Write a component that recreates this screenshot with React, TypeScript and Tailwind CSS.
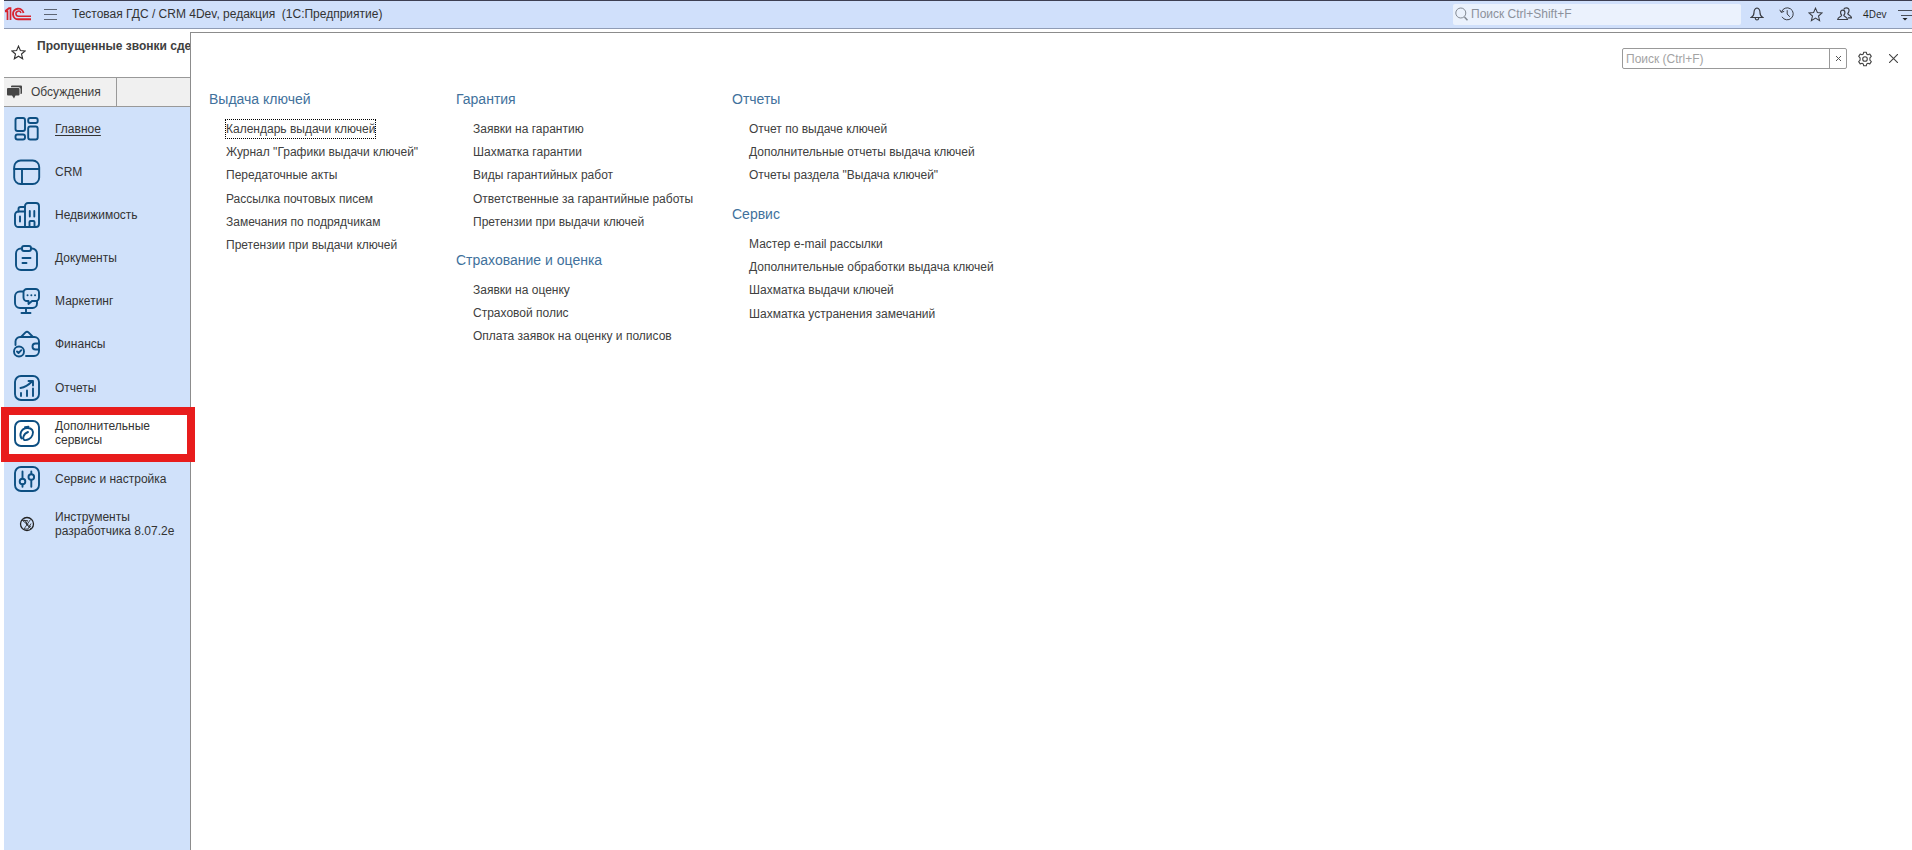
import type { ReactNode } from 'react';

interface MenuGroup {
  title: string;
  links: string[];
}

interface Section {
  label: string;
  icon: ReactNode;
  height: string;
  underlined?: boolean;
  active?: boolean;
}

const COLUMNS: { width: string; groups: MenuGroup[] }[] = [
  {
    width: 'w-[247px]',
    groups: [
      {
        title: 'Выдача ключей',
        links: [
          'Календарь выдачи ключей',
          'Журнал "Графики выдачи ключей"',
          'Передаточные акты',
          'Рассылка почтовых писем',
          'Замечания по подрядчикам',
          'Претензии при выдачи ключей',
        ],
      },
    ],
  },
  {
    width: 'w-[276px]',
    groups: [
      {
        title: 'Гарантия',
        links: [
          'Заявки на гарантию',
          'Шахматка гарантии',
          'Виды гарантийных работ',
          'Ответственные за гарантийные работы',
          'Претензии при выдачи ключей',
        ],
      },
      {
        title: 'Страхование и оценка',
        links: ['Заявки на оценку', 'Страховой полис', 'Оплата заявок на оценку и полисов'],
      },
    ],
  },
  {
    width: 'w-[276px]',
    groups: [
      {
        title: 'Отчеты',
        links: [
          'Отчет по выдаче ключей',
          'Дополнительные отчеты выдача ключей',
          'Отчеты раздела "Выдача ключей"',
        ],
      },
      {
        title: 'Сервис',
        links: [
          'Мастер e-mail рассылки',
          'Дополнительные обработки выдача ключей',
          'Шахматка выдачи ключей',
          'Шахматка устранения замечаний',
        ],
      },
    ],
  },
];

function SectionIcon({ children }: { children: ReactNode }) {
  return (
    <svg
      width="28"
      height="28"
      viewBox="0 0 28 28"
      fill="none"
      stroke="#0d4f82"
      strokeWidth="1.9"
      strokeLinecap="round"
      strokeLinejoin="round"
      aria-hidden="true"
    >
      {children}
    </svg>
  );
}

const SECTIONS: Section[] = [
  {
    label: 'Главное',
    height: 'h-[43px]',
    underlined: true,
    icon: (
      <SectionIcon>
        <rect x="2.5" y="3" width="9.5" height="13" rx="2" />
        <rect x="2.5" y="19.5" width="9.5" height="5" rx="2" />
        <rect x="15.2" y="3" width="9.5" height="5" rx="2" />
        <rect x="15.2" y="11.5" width="9.5" height="13" rx="2" />
      </SectionIcon>
    ),
  },
  {
    label: 'CRM',
    height: 'h-[43px]',
    icon: (
      <SectionIcon>
        <rect x="1.2" y="2.5" width="25" height="23.5" rx="6.5" />
        <path d="M1.2 11h25M9 11v15" />
      </SectionIcon>
    ),
  },
  {
    label: 'Недвижимость',
    height: 'h-[43px]',
    icon: (
      <SectionIcon>
        <path d="M12 26H5.5A3.5 3.5 0 0 1 2 22.500V14a3.500 3.500 0 0 1 3.500-3.500H12" />
        <path d="M5.500 10.500V8a2 2 0 0 1 2-2H12" />
        <path d="M12 26V5a3 3 0 0 1 3-3h8a3 3 0 0 1 3 3v18a3 3 0 0 1-3 3z" />
        <path d="M7 15.500v5M16.800 10v5.500M21.300 10v5.500" />
        <path d="M16.500 26v-5a1 1 0 0 1 1-1h3a1 1 0 0 1 1 1v5" />
      </SectionIcon>
    ),
  },
  {
    label: 'Документы',
    height: 'h-[43px]',
    icon: (
      <SectionIcon>
        <path d="M9 4.500H8a5 5 0 0 0-5 5V21a5 5 0 0 0 5 5h11a5 5 0 0 0 5-5V9.500a5 5 0 0 0-5-5h-1" />
        <rect x="9" y="2" width="9" height="5" rx="2" />
        <path d="M9.500 14h8M9.500 19h4" />
      </SectionIcon>
    ),
  },
  {
    label: 'Маркетинг',
    height: 'h-[43px]',
    icon: (
      <SectionIcon>
        <path d="M10 4.500H7a5 5 0 0 0-5 5V16a5 5 0 0 0 5 5h12.500a4.500 4.500 0 0 0 4.500-4.500V14" />
        <path d="M14 2h8.500A3.500 3.500 0 0 1 26 5.500v5a3.500 3.500 0 0 1-3.500 3.500H19l-3.500 3v-3H14a3.500 3.500 0 0 1-3.500-3.500v-5A3.500 3.500 0 0 1 14 2z" />
        <path d="M14.500 8.300h.1M18.300 8.300h.1M22 8.300h.1M13 21v5M8.500 26h9" />
      </SectionIcon>
    ),
  },
  {
    label: 'Финансы',
    height: 'h-11',
    icon: (
      <SectionIcon>
        <path d="M2.500 15v-3.500A4.500 4.500 0 0 1 7 7h14.500a4.500 4.500 0 0 1 4.500 4.500V21a5 5 0 0 1-5 5h-8" />
        <path d="M8 7l4.500-4.600a2.200 2.200 0 0 1 3 0L20 7" />
        <path d="M26 13.500h-3.500a3 3 0 0 0 0 6H26" />
        <circle cx="6" cy="21.500" r="5" />
        <path d="M4 21.500L5.500 23l2.800-2.800" />
      </SectionIcon>
    ),
  },
  {
    label: 'Отчеты',
    height: 'h-[43px]',
    icon: (
      <SectionIcon>
        <rect x="2" y="2" width="24" height="24" rx="6" />
        <path d="M7.500 14c4.500-.8 8-3 11.500-6.500M15.500 7H20v4.500M8 19v3M14 16.500V22M20 14.500V22" />
      </SectionIcon>
    ),
  },
  {
    label: 'Дополнительные сервисы',
    height: 'h-12',
    active: true,
    icon: (
      <SectionIcon>
        <rect x="2" y="2" width="24" height="25" rx="6" />
        <path d="M8.500 19.500C6 15.500 8 9.500 14 9c5-.3 7 3 5.500 7-1.500 4-5.500 5.500-8 5-2.300-.7-1.500-6 3.500-8M12 8.200l3.500-.4" />
      </SectionIcon>
    ),
  },
  {
    label: 'Сервис и настройка',
    height: 'h-[43px]',
    icon: (
      <SectionIcon>
        <rect x="2" y="2" width="24" height="24" rx="6" />
        <circle cx="9.500" cy="16.500" r="2.800" />
        <circle cx="18.300" cy="12" r="2.800" />
        <path d="M9.500 6.500v7M9.500 19.500v2.300M18.300 6.500v2.300M18.300 15v6.800" />
      </SectionIcon>
    ),
  },
  {
    label: 'Инструменты разработчика 8.07.2е',
    height: 'h-12',
    icon: (
      <svg width="28" height="28" viewBox="0 0 28 28" fill="none" stroke="#222" aria-hidden="true">
        <circle cx="14" cy="14" r="6.500" strokeWidth="1.300" />
        <path d="M8.500 10.500h6l-1.500 3.500 5 5M11 9.500l3.500 5M17.500 9.500l-6.500 9.500h4l3-5.500M10 11l8 6" strokeWidth="0.800" />
      </svg>
    ),
  },
];

function Star({ size, strokeWidth, color }: { size: number; strokeWidth: number; color: string }) {
  return (
    <svg width={size} height={size} viewBox="0 0 16 16" fill="none" stroke={color} strokeWidth={strokeWidth} aria-hidden="true">
      <path d="M8 1.200l2 4.700 5.100.4-3.900 3.300 1.200 5L8 11.900l-4.400 2.700 1.200-5L.9 6.300 6 5.900z" />
    </svg>
  );
}

function Logo() {
  return (
    <svg width="28" height="14" viewBox="0 0 28 14" fill="none" stroke="#d8232f" aria-label="1С">
      <path d="M1 4.300h2.500V13M1.300 4L5 1.200h1.500V13" strokeWidth="1.700" />
      <path d="M19.500 6A5.300 5.300 0 1 0 14.500 12.300H27" strokeWidth="1.900" />
      <path d="M17 6A2.600 2.600 0 1 0 14.500 9.300H27" strokeWidth="1.500" />
    </svg>
  );
}

function TopBar() {
  return (
    <header className="flex h-[29px] items-center border-t border-b border-t-[#3d3f52] border-b-[#8f9cb5] bg-[#d0e0fb] pb-px">
      <Logo />
      <button type="button" aria-label="Главное меню" className="ml-3 flex w-[13px] flex-col gap-1">
        <span className="h-px bg-[#5d6573]" />
        <span className="h-px bg-[#5d6573]" />
        <span className="h-px bg-[#5d6573]" />
      </button>
      <h1 className="ml-[15px] flex-1 text-xs leading-[14px] whitespace-pre text-[#333]">
        {'Тестовая ГДС / CRM 4Dev, редакция  (1С:Предприятие)'}
      </h1>
      <label className="flex h-[21px] w-[288px] items-center rounded-xs bg-[#ebf2fd] pl-[2px]">
        <svg width="13" height="14" viewBox="0 0 13 14" fill="none" stroke="#838a94" aria-hidden="true">
          <circle cx="5.800" cy="6" r="5" />
          <path d="M9.500 10l3 3.300" strokeWidth="1.500" />
        </svg>
        <input
          type="text"
          aria-label="Поиск"
          placeholder="Поиск Ctrl+Shift+F"
          className="ml-[3px] flex-1 text-xs outline-none placeholder:text-[#8b919b]"
        />
      </label>
      <div className="ml-2 flex items-center gap-[13px]">
        <button type="button" aria-label="Оповещения" className="flex size-4 items-center justify-center">
          <svg width="14" height="14" viewBox="0 0 14 14" fill="none" stroke="#3a3d44" strokeWidth="1.200" aria-hidden="true">
            <path d="M7 1C4.700 1.500 4 3.200 4 5.500 4 8 3 9.500 1.200 10.500h11.600C11 9.500 10 8 10 5.500 10 3.200 9.300 1.500 7 1zM5.200 11c.2 1.300.9 2 1.800 2s1.600-.7 1.800-2" />
          </svg>
        </button>
        <button type="button" aria-label="История" className="flex size-4 items-center justify-center">
          <svg width="15" height="14" viewBox="0 0 15 14" fill="none" stroke="#3a3d44" aria-hidden="true">
            <path d="M2.500 5A6 6 0 1 1 3 9.800M.8 2.800l1.500 2.700 2.900-1.200M8.200 3.200V7l2.600 2.800" />
          </svg>
        </button>
        <button type="button" aria-label="Избранное" className="flex size-4 items-center justify-center">
          <Star size={15} strokeWidth={1.1} color="#3a3d44" />
        </button>
        <button type="button" aria-label="Пользователи" className="flex size-4 items-center justify-center">
          <svg width="15" height="14" viewBox="0 0 15 14" fill="none" stroke="#3a3d44" strokeWidth="1.200" aria-hidden="true">
            <path d="M5.800 3.200c-1.500 0-2.400 1-2.200 2.700.1 1.100.6 1.900 1 2.300-.1 1.800-3.600 1.300-3.900 4.300h9.800c-.3-3-3.500-2.500-3.700-4.300.7-.6 1.100-1.500 1.100-2.600 0-1.500-.8-2.400-2.100-2.400z" />
            <path d="M6.700 2.500C7.100 1.400 8 .8 9.300.8c1.900 0 2.900 1.200 2.700 3-.1 1.200-.7 2.200-1.200 2.700.1 2 3.500 1.400 3.700 4.300h-3.500" />
          </svg>
        </button>
      </div>
      <button type="button" className="ml-[11px] w-[26px] text-left text-[10px] font-[Open_Sans,sans-serif] text-[#222]">
        4Dev
      </button>
      <button type="button" aria-label="Сервис" className="ml-[9px]">
        <svg width="14" height="14" viewBox="0 0 14 14" fill="none" stroke="#4a4f5a" aria-hidden="true">
          <path d="M0 3.500h14M3 8.500h11" />
          <path d="M4.500 11h5L7 13.500z" fill="#222" stroke="none" />
        </svg>
      </button>
    </header>
  );
}

function Sidebar() {
  return (
    <aside className="flex w-[186px] shrink-0 flex-col">
      <div className="flex h-12 items-start">
        <span className="mt-4 ml-[7px]">
          <Star size={15} strokeWidth={1.2} color="#333" />
        </span>
        <span className="mt-[9px] ml-[11px] text-xs font-bold whitespace-nowrap text-[#404040]">
          Пропущенные звонки сде
        </span>
      </div>
      <div className="flex h-[30px] border-t border-b border-[#999] bg-[#f0f0f0]">
        <button type="button" className="flex w-[113px] items-center border-r border-[#999] pl-[3px] text-xs text-[#404040]">
          <svg width="15" height="14" viewBox="0 0 15 14" fill="#454545" aria-hidden="true">
            <path d="M5 .5h9a1 1 0 0 1 1 1V8a1 1 0 0 1-1 1h-.5V4a1.800 1.800 0 0 0-1.800-1.800H4V1.500a1 1 0 0 1 1-1z" />
            <path d="M1 3h10.500a1 1 0 0 1 1 1v5.500a1 1 0 0 1-1 1H8.500L7 13.500 5 10.500H1a1 1 0 0 1-1-1V4a1 1 0 0 1 1-1z" />
          </svg>
          <span className="ml-[9px]">Обсуждения</span>
        </button>
      </div>
      <nav className="flex flex-1 flex-col bg-[#d0e1fa]">
        {SECTIONS.map((s) => (
          <a
            key={s.label}
            href="#"
            className={`relative flex shrink-0 items-center pl-[9px] text-xs leading-[14px] text-[#333] ${s.height} ${
              s.active ? 'bg-white' : ''
            }`}
          >
            {s.icon}
            <span className={`ml-[14px] w-[128px] ${s.underlined ? 'underline underline-offset-2' : ''}`}>
              {s.label}
            </span>
            {s.active && (
              <span className="pointer-events-none absolute -top-[2px] -right-[5px] -bottom-[5px] -left-[3px] z-10 border-8 border-[#e81c1c]" />
            )}
          </a>
        ))}
      </nav>
    </aside>
  );
}

function FunctionsPanel() {
  return (
    <main className="flex-1 border-t border-l border-[#8c8c8c] bg-white">
      <div className="flex items-center justify-end pt-[15px] pr-[14px]">
        <div className="flex h-[21px] w-[225px] rounded-xs border border-[#999]">
          <input
            type="text"
            aria-label="Поиск по командам"
            placeholder="Поиск (Ctrl+F)"
            className="min-w-0 flex-1 pl-[3px] text-xs outline-none placeholder:text-[#a3a3a3]"
          />
          <button type="button" aria-label="Очистить" className="flex w-[17px] items-center justify-center border-l border-[#999]">
            <svg width="5" height="5" viewBox="0 0 5 5" stroke="#555" aria-hidden="true">
              <path d="M0 0l5 5M5 0L0 5" />
            </svg>
          </button>
        </div>
        <button type="button" aria-label="Настройка" className="ml-[10px]">
          <svg width="16" height="16" viewBox="0 0 16 16" fill="none" stroke="#444" strokeWidth="1.100" strokeLinejoin="round" aria-hidden="true">
            <circle cx="8" cy="8" r="2.300" />
            <path d="M6.700 1.200h2.600l.4 1.900 1.300.7 1.800-.7 1.500 2.300-1.400 1.400v2.400l1.400 1.400-1.500 2.300-1.800-.7-1.300.7-.4 1.900H6.700l-.4-1.900-1.300-.7-1.800.7-1.500-2.300 1.400-1.400V6.800L1.700 5.400l1.500-2.300 1.800.7 1.300-.7z" />
          </svg>
        </button>
        <button type="button" aria-label="Закрыть" className="ml-4">
          <svg width="9" height="9" viewBox="0 0 9 9" stroke="#444" strokeWidth="1.100" aria-hidden="true">
            <path d="M0 0l9 9M9 0L0 9" />
          </svg>
        </button>
      </div>
      <div className="flex pt-5 pl-[18px]">
        {COLUMNS.map((col) => (
          <div key={col.groups[0].title} className={`shrink-0 ${col.width}`}>
            {col.groups.map((group) => (
              <section key={group.title} className="mb-[17px]">
                <h2 className="mb-2 h-5 text-sm leading-5 text-[#41719c]">{group.title}</h2>
                <ul className="pl-[17px]">
                  {group.links.map((link, i) => (
                    <li key={link} className="flex h-[23px] items-center nth-[3n]:h-6">
                      <a
                        href="#"
                        className={`text-xs leading-[18px] whitespace-nowrap text-[#404040] ${
                          group.title === 'Выдача ключей' && i === 0
                            ? 'outline-1 outline-black outline-dotted'
                            : ''
                        }`}
                      >
                        {link}
                      </a>
                    </li>
                  ))}
                </ul>
              </section>
            ))}
          </div>
        ))}
      </div>
    </main>
  );
}

export default function App() {
  return (
    <div className="flex min-h-screen flex-col overflow-hidden bg-white pl-1 font-['Liberation_Sans',Arial,sans-serif]">
      <TopBar />
      <div className="flex flex-1">
        <Sidebar />
        <div className="flex flex-1 pt-[3px]">
          <FunctionsPanel />
        </div>
      </div>
    </div>
  );
}
